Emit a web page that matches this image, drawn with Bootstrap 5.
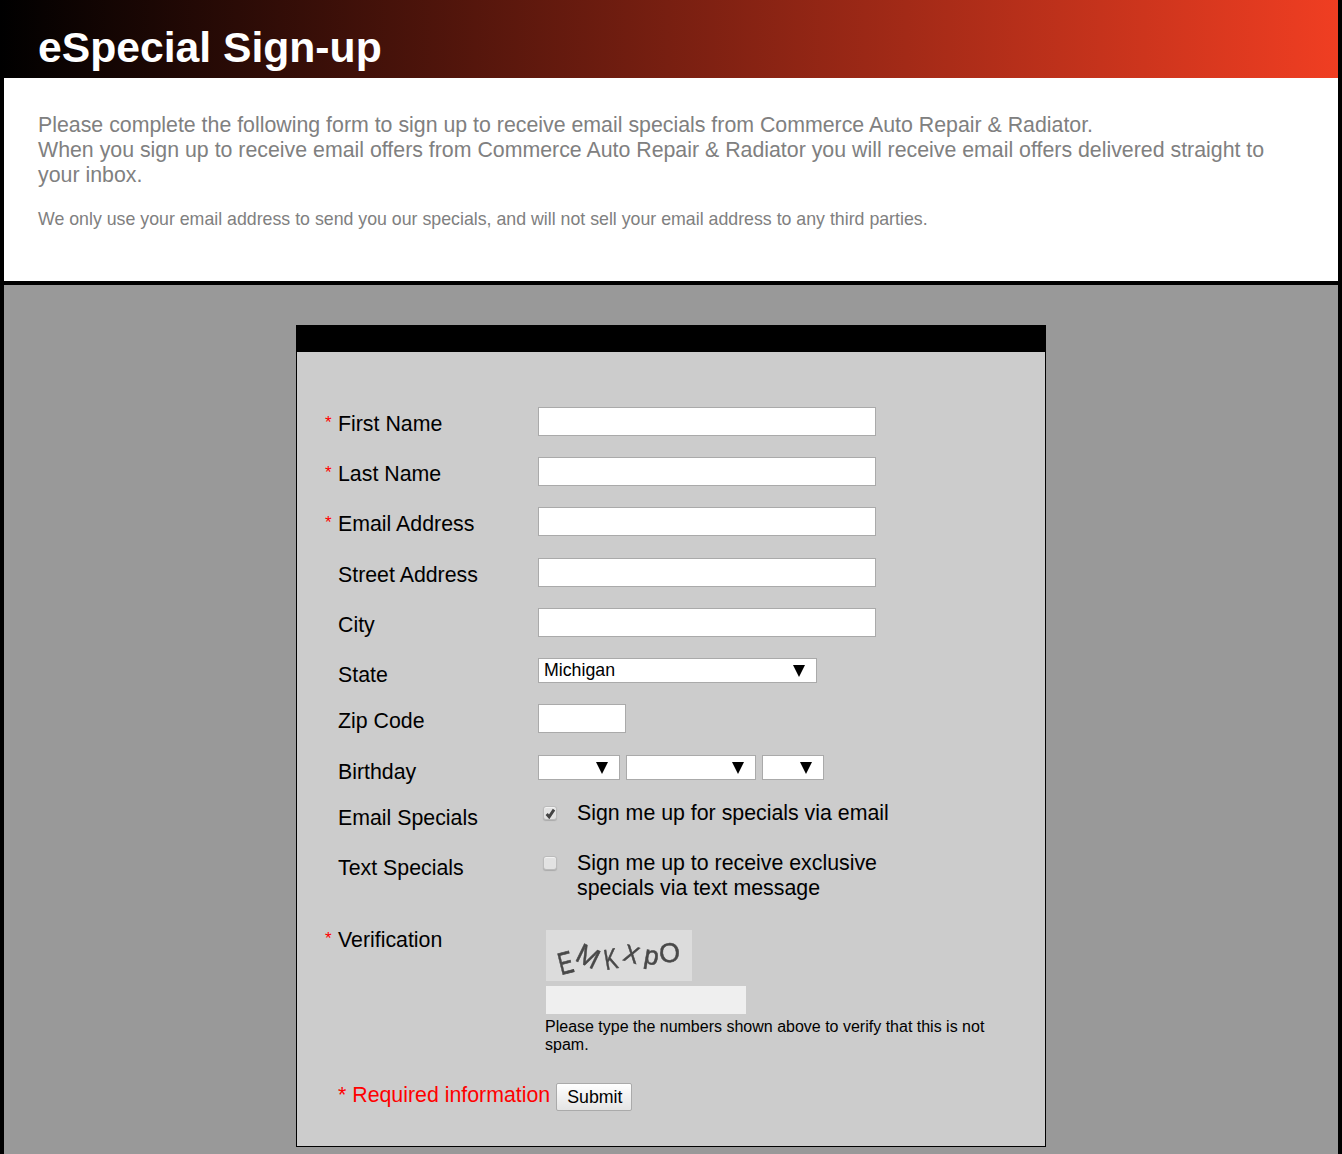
<!DOCTYPE html>
<html lang="en">
<head>
  <meta charset="UTF-8" />
  <meta name="viewport" content="width=device-width, initial-scale=1.0"/>
  <title>eSpecial Sign-up</title>

  <link href="https://cdn.jsdelivr.net/npm/bootstrap@5.3.3/dist/css/bootstrap.min.css" rel="stylesheet"/>

  <style>
    html, body {
      margin: 0;
      background: #999;
      font-family: "Liberation Sans", Arial, sans-serif;
      color: #000;
    }

    .page-wrap {
      border-left: 4px solid #000;
      border-right: 4px solid #000;
    }

    .top-banner {
      height: 78px;
      margin-left: -4px;
      padding: 22px 0 0 38px;
      background: linear-gradient(to right, #000, #f03e22);
    }

    .top-banner h1 {
      margin: 0;
      font-size: 42.67px;
      line-height: 50px;
      font-weight: 700;
      color: #fff;
    }

    .intro-box {
      height: 207px;
      padding: 35px 40px 0 34px;
      background: #fff;
      border-bottom: 4px solid #000;
      color: #808080;
    }

    .intro-box p {
      margin: 0;
      font-size: 21.33px;
      line-height: 25px;
    }

    .intro-box .intro-note {
      margin-top: 20px;
      font-size: 17.76px;
      line-height: 22px;
    }

    .grey-area {
      padding: 40px 0 7px;
      background: #999;
    }

    .signup-box {
      width: 750px;
      height: 822px;
      margin-left: 292px;
      background: #ccc;
      border: 1px solid #000;
      border-top: 0;
    }

    .signup-head {
      height: 27px;
      margin: 0 -1px;
      background: #000;
    }

    .signup-body {
      padding: 55px 28px 0 28px;
    }

    .field-row {
      display: flex;
    }

    .field-label {
      position: relative;
      flex: 0 0 213px;
      height: 29px;
      padding: 5px 0 0 13px;
      font-size: 21.33px;
      line-height: 25px;
    }

    .req-star {
      position: absolute;
      left: 0;
      top: 3px;
      font-size: 17px;
      color: #f00;
    }

    .text-field.form-control {
      width: 338px;
      height: 29px;
      padding: 0 5px;
      border: 1px solid #aaa;
      border-radius: 0;
      font-size: 18px;
    }

    .text-field.zip-field {
      width: 88px;
    }

    .drop-field.form-select {
      height: 25px;
      padding: 0 0 0 5px;
      border: 1px solid #aaa;
      border-radius: 0;
      font-size: 17.76px;
      line-height: 23px;
      color: #000;
      background-size: 12px 12px;
      background-position: right 11px center;
      background-image: url("data:image/svg+xml,%3Csvg xmlns='http://www.w3.org/2000/svg' viewBox='0 0 12 12'%3E%3Cpath d='M0 0h12L6 12z'/%3E%3C/svg%3E");
    }

    .w-state { width: 279px; }
    .w-month { width: 82px; }
    .w-day { width: 130px; }
    .w-year { width: 62px; }

    .birthday-group {
      display: flex;
      gap: 6px;
    }

    .tick-col {
      flex: 0 0 39px;
      padding: 5px 0 0 5px;
    }

    .tick-box.form-check-input {
      display: block;
      width: 14px;
      height: 14px;
      margin: 0;
      border: 1px solid #bbb;
      border-radius: 3px;
      background-color: #e2e2e2;
      box-shadow: inset 0 1px 1px #f4f4f4, 0 1px 1px #aaa;
    }

    .tick-box.form-check-input:checked {
      background-color: #e2e2e2;
      border-color: #bbb;
      background-size: 11px 11px;
      background-image: url("data:image/svg+xml,%3Csvg xmlns='http://www.w3.org/2000/svg' viewBox='0 0 10 10'%3E%3Cpath d='M1.5 5.5l2.3 2.6 4.4-6.6' fill='none' stroke='%23444' stroke-width='2.6'/%3E%3C/svg%3E");
    }

    .tick-text {
      font-size: 21.33px;
      line-height: 25px;
    }

    .captcha-col {
      padding: 7px 0 0 8px;
      width: 470px;
    }

    .captcha-pic {
      display: block;
      width: 146px;
      height: 51px;
    }

    .captcha-input.form-control {
      width: 200px;
      height: 28px;
      margin-top: 5px;
      border: 0;
      border-radius: 0;
      background: #efefef;
    }

    .captcha-help {
      margin: 4px 0 0 -1px;
      font-size: 16px;
      line-height: 18px;
    }

    .submit-row {
      display: flex;
      align-items: center;
      padding-left: 13px;
    }

    .required-note {
      font-size: 21.33px;
      line-height: 25px;
      color: #f00;
    }

    .submit-btn.btn {
      height: 28px;
      margin: 4px 0 0 6px;
      padding: 0 9px 0 10px;
      border: 1px solid #aaa;
      border-radius: 2px;
      background: linear-gradient(to bottom, #fff, #e4e4e4);
      font-size: 17.76px;
      line-height: 26px;
      color: #000;
    }

    .gap-21 { margin-top: 21px; }
    .gap-22 { margin-top: 22px; }
    .gap-17 { margin-top: 17px; }
    .gap-25 { margin-top: 25px; }
  </style>
</head>
<body>

<div class="page-wrap">
  <div class="top-banner">
    <h1>eSpecial Sign-up</h1>
  </div>

  <div class="intro-box">
    <p>Please complete the following form to sign up to receive email specials from Commerce Auto Repair &amp; Radiator.<br>When you sign up to receive email offers from Commerce Auto Repair &amp; Radiator you will receive email offers delivered straight to your inbox.</p>
    <p class="intro-note">We only use your email address to send you our specials, and will not sell your email address to any third parties.</p>
  </div>

  <div class="grey-area">
    <div class="signup-box">
      <div class="signup-head"></div>
      <form class="signup-body">

        <div class="field-row">
          <label class="field-label"><span class="req-star">*</span>First Name</label>
          <input type="text" class="form-control text-field">
        </div>

        <div class="field-row gap-21">
          <label class="field-label"><span class="req-star">*</span>Last Name</label>
          <input type="text" class="form-control text-field">
        </div>

        <div class="field-row gap-21">
          <label class="field-label"><span class="req-star">*</span>Email Address</label>
          <input type="text" class="form-control text-field">
        </div>

        <div class="field-row gap-22">
          <label class="field-label">Street Address</label>
          <input type="text" class="form-control text-field">
        </div>

        <div class="field-row gap-21">
          <label class="field-label">City</label>
          <input type="text" class="form-control text-field">
        </div>

        <div class="field-row gap-21">
          <label class="field-label">State</label>
          <select class="form-select drop-field w-state">
            <option>Michigan</option>
          </select>
        </div>

        <div class="field-row gap-17">
          <label class="field-label">Zip Code</label>
          <input type="text" class="form-control text-field zip-field">
        </div>

        <div class="field-row gap-22">
          <label class="field-label">Birthday</label>
          <div class="birthday-group align-self-start">
            <select class="form-select drop-field w-month"><option></option></select>
            <select class="form-select drop-field w-day"><option></option></select>
            <select class="form-select drop-field w-year"><option></option></select>
          </div>
        </div>

        <div class="field-row gap-17">
          <label class="field-label">Email Specials</label>
          <div class="tick-col"><input type="checkbox" class="form-check-input tick-box" checked></div>
          <div class="tick-text">Sign me up for specials via email</div>
        </div>

        <div class="field-row gap-21">
          <label class="field-label">Text Specials</label>
          <div class="tick-col"><input type="checkbox" class="form-check-input tick-box"></div>
          <div class="tick-text">Sign me up to receive exclusive<br>specials via text message</div>
        </div>

        <div class="field-row gap-22">
          <label class="field-label"><span class="req-star">*</span>Verification</label>
          <div class="captcha-col">
            <svg class="captcha-pic" viewBox="0 0 146 51" role="img" aria-label="Verification image">
              <defs><filter id="soft"><feGaussianBlur stdDeviation="0.5"/></filter></defs>
              <rect width="146" height="51" fill="#dcdcdc"/>
              <g filter="url(#soft)" font-family="Liberation Sans, sans-serif" fill="#484848" stroke="#484848" stroke-width=".5">
                <text transform="translate(15 45) rotate(-14) scale(.85 1.2)" font-size="26">E</text>
                <text transform="translate(28 30) rotate(26) scale(.95 1)" font-size="28">M</text>
                <text transform="translate(60 40) rotate(-10) scale(.8 1.15)" font-size="25">K</text>
                <text transform="translate(76 30) rotate(16) scale(.95 1)" font-size="24">X</text>
                <text transform="translate(97 33) rotate(10) scale(1.05 1.05)" font-size="25">p</text>
                <text transform="translate(114 33) rotate(-6) scale(1 1)" font-size="27">O</text>
              </g>
            </svg>
            <input type="text" class="form-control captcha-input">
            <p class="captcha-help">Please type the numbers shown above to verify that this is not spam.</p>
          </div>
        </div>

        <div class="submit-row gap-25">
          <span class="required-note">* Required information</span>
          <button type="button" class="btn submit-btn">Submit</button>
        </div>

      </form>
    </div>
  </div>
</div>

<script src="https://cdn.jsdelivr.net/npm/bootstrap@5.3.3/dist/js/bootstrap.bundle.min.js"></script>
</body>
</html>
